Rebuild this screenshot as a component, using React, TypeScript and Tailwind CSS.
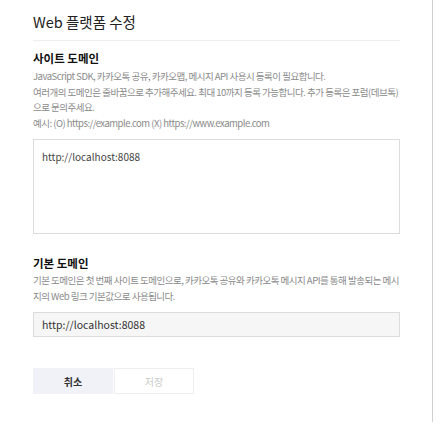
import React, { useState } from "react";

export default function App() {
  const [domains, setDomains] = useState("http://localhost:8088");

  return (
    <div className="w-[441px] h-[431px] bg-white" style={{ fontFamily: '"Noto Sans CJK KR", "Noto Sans", sans-serif' }}>
      <div className="w-[433px] h-[422px] border-r border-[#cfcfcf] pl-[33px] pr-[32px]">
        <h2 className="pt-[12px] pb-[9px] text-[14.5px] leading-[19px] text-[#222] border-b border-[#eeeeee]">
          Web 플랫폼 수정
        </h2>

        <div className="pt-[9px]">
          <h3 className="text-[11.5px] leading-[16px] font-bold text-[#111]">사이트 도메인</h3>
          <p className="mt-[3px] whitespace-nowrap text-[9.5px] leading-[15.5px] text-[#8a8a8a] tracking-[-0.5px]">
            JavaScript SDK, 카카오톡 공유, 카카오맵, 메시지 API 사용시 등록이 필요합니다.
            <br />
            여러개의 도메인은 줄바꿈으로 추가해주세요. 최대 10까지 등록 가능합니다. 추가 등록은 포럼(데브톡)
            <br />
            으로 문의주세요.
            <br />
            예시: (O) https://example.com (X) https://www.example.com
          </p>
          <textarea
            value={domains}
            onChange={(e) => setDomains(e.target.value)}
            className="mt-[8px] block w-full h-[95px] border border-[#dcdcdc] px-[8px] py-[9px] text-[10px] leading-[15px] text-[#444] resize-none outline-none"
          />
        </div>

        <div className="pt-[21px]">
          <h3 className="text-[11.5px] leading-[16px] font-bold text-[#111]">기본 도메인</h3>
          <p className="mt-[1px] whitespace-nowrap text-[9.5px] leading-[16px] text-[#8a8a8a] tracking-[-0.5px]">
            기본 도메인은 첫 번째 사이트 도메인으로, 카카오톡 공유와 카카오톡 메시지 API를 통해 발송되는 메시
            <br />
            지의 Web 링크 기본값으로 사용됩니다.
          </p>
          <div className="mt-[8px] h-[25px] flex items-center border border-[#dcdcdc] bg-[#f6f6f6] px-[8px] text-[10.5px] text-[#333]">
            http://localhost:8088
          </div>
        </div>

        <div className="mt-[31px] flex gap-[1px]">
          <button className="w-[80px] h-[26px] bg-[#f1f2f8] text-[10px] font-bold text-[#333]">취소</button>
          <button className="w-[80px] h-[26px] border border-[#eeeeee] bg-white text-[10px] text-[#cccccc]" disabled>
            저장
          </button>
        </div>
      </div>
    </div>
  );
}
